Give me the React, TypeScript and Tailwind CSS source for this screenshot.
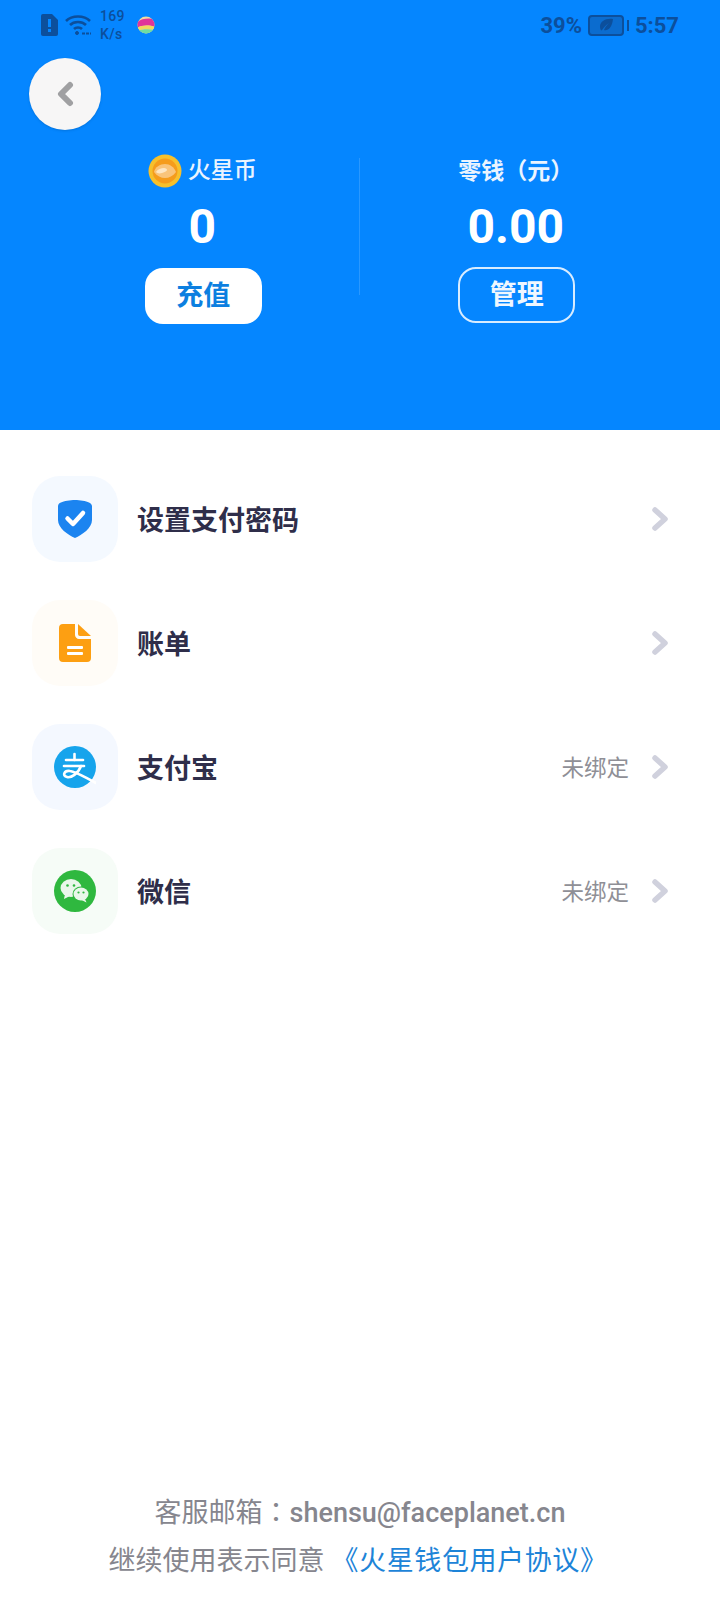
import React from "react";

const CJK = "font-['Roboto','Noto_Sans_CJK_SC',sans-serif]";

function SimIcon() {
  return (
    <svg width="17" height="22" viewBox="0 0 17 22">
      <path d="M2 0h9l6 6v14a2 2 0 0 1-2 2H2a2 2 0 0 1-2-2V2a2 2 0 0 1 2-2z" fill="#0c4f9c" />
      <rect x="7" y="5" width="3" height="8" fill="#0586ff" />
      <rect x="7" y="15" width="3" height="3" fill="#0586ff" />
    </svg>
  );
}

function WifiIcon() {
  return (
    <svg width="27" height="22" viewBox="0 0 27 22" fill="none" stroke="#0c4f9c" strokeWidth="2.6">
      <path d="M1 7c6-6 18-6 24 0" />
      <path d="M5 11c4-4 12-4 16 0" />
      <path d="M9 15c2-2 6-2 8 0" />
      <circle cx="12" cy="19" r="1.500" fill="#0c4f9c" strokeWidth="1" />
      <path d="M17 19.500h9" strokeWidth="2.200" strokeDasharray="3 1" />
    </svg>
  );
}

function BallIcon() {
  return (
    <svg width="18" height="18" viewBox="0 0 18 18">
      <defs>
        <clipPath id="ball">
          <circle cx="9" cy="9" r="8.500" />
        </clipPath>
      </defs>
      <g clipPath="url(#ball)">
        <rect width="18" height="18" fill="#f4d9a0" />
        <path d="M0 6c5-4 12-4 18-3v8C12 9 5 9 0 12z" fill="#e0359a" />
        <path d="M0 12c5-3 12-3 18-1v3C12 13 5 13 0 15z" fill="#f0d860" />
        <path d="M0 15c5-2 12-2 18-1v4H0z" fill="#6fdca0" />
      </g>
    </svg>
  );
}

function BatteryIcon() {
  return (
    <div className="flex items-center gap-[3px]">
      <div className="w-[36px] h-[21px] rounded-[4px] border-2 border-[#0c4f9c] bg-[#0b6ccf] flex items-center justify-center">
        <svg width="16" height="14" viewBox="0 0 16 14">
          <path d="M15 1C8 0 2 3 2 9c0 1 .3 2 .8 3 .2.5 1 .5 1.300 0C7 8 9 6 11 5 9 7 7 9 6 12c4 1 8-2 9-11z" fill="#0c4f9c" />
        </svg>
      </div>
      <div className="w-[2px] h-[11px] bg-[#0c4f9c]" />
    </div>
  );
}

function StatusBar() {
  return (
    <div className="h-[50px] flex items-center justify-between pl-[41px] pr-[41px] text-[#0c4f9c]">
      <div className="flex items-center">
        <SimIcon />
        <div className="ml-[7px]">
          <WifiIcon />
        </div>
        <div className="ml-[8px] w-[30px] text-[14px] leading-[18px] font-medium font-['Roboto',sans-serif] tracking-wide">
          <div>169</div>
          <div>K/s</div>
        </div>
        <div className="ml-[7px]">
          <BallIcon />
        </div>
      </div>
      <div className="flex items-center text-[22px] font-bold font-['Roboto',sans-serif]">
        <span>39%</span>
        <div className="ml-[6px]">
          <BatteryIcon />
        </div>
        <span className="ml-[6px]">5:57</span>
      </div>
    </div>
  );
}

function Coin() {
  return (
    <svg width="34" height="34" viewBox="0 0 34 34">
      <circle cx="17" cy="17" r="16.500" fill="#f6c02c" />
      <circle cx="17" cy="17" r="12.500" fill="#f59c1c" />
      <path d="M6 18c1-5 6-8 11-8s9 3 11 8c-3 4-7 6-11 6s-8-2-11-6z" fill="#f9c47a" />
      <path d="M8 18c2-3 5-4 8-4 2 0 3 1 3 2s-2 2-5 3-5 0-6-1z" fill="#fde6c4" />
    </svg>
  );
}

function ShieldIcon() {
  return (
    <svg width="34" height="38" viewBox="0 0 34 38">
      <path d="M17 0c5 0 11 1 14 2.500 2 1 3 2 3 4V20c0 8-10 15-17 18C10 35 0 28 0 20V6.500c0-2 1-3.500 3-4C6 1 12 0 17 0z" fill="#1b84f0" />
      <path d="M9.500 18.500l5.500 5.500 10-11" fill="none" stroke="#fff" strokeWidth="4.500" strokeLinecap="round" strokeLinejoin="round" />
    </svg>
  );
}

function DocIcon() {
  return (
    <svg width="32" height="38" viewBox="0 0 32 38">
      <path d="M4 0h12v11c0 2 2 4 4 4h12v19a4 4 0 0 1-4 4H4a4 4 0 0 1-4-4V4a4 4 0 0 1 4-4z" fill="#fd9f12" />
      <path d="M19 0l13 12H21a2 2 0 0 1-2-2z" fill="#fd9f12" />
      <rect x="8" y="22" width="16" height="3" rx="1" fill="#fff" />
      <rect x="8" y="28" width="16" height="3" rx="1" fill="#fff" />
    </svg>
  );
}

function AlipayIcon() {
  return (
    <svg width="42" height="42" viewBox="0 0 42 42">
      <circle cx="21" cy="21" r="21" fill="#16a4ec" />
      <g fill="none" stroke="#fff" strokeWidth="2.600" strokeLinecap="round">
        <path d="M12 14h17" />
        <path d="M20.500 8v6" />
        <path d="M10 20h20" />
        <path d="M27 20c-3 8-10 12-14 11-5-1-3-7 3-6 7 1 14 6 26 12" />
      </g>
    </svg>
  );
}

function WechatIcon() {
  return (
    <svg width="42" height="42" viewBox="0 0 42 42">
      <circle cx="21" cy="21" r="21" fill="#2fb83f" />
      <ellipse cx="17" cy="18" rx="10.500" ry="9" fill="#e9f7ea" />
      <path d="M11 24l-1 5 6-3z" fill="#e9f7ea" />
      <ellipse cx="27" cy="24" rx="8.500" ry="7.500" fill="#2fb83f" />
      <ellipse cx="27" cy="24" rx="7.500" ry="6.500" fill="#e9f7ea" />
      <path d="M31 29l1.500 3.500-5-2.500z" fill="#e9f7ea" />
      <circle cx="13.500" cy="15.500" r="1.300" fill="#2fb83f" />
      <circle cx="20" cy="15.500" r="1.300" fill="#2fb83f" />
      <circle cx="24.500" cy="22.500" r="1.100" fill="#2fb83f" />
      <circle cx="29.500" cy="22.500" r="1.100" fill="#2fb83f" />
    </svg>
  );
}

function Chevron() {
  return (
    <svg width="16" height="24" viewBox="0 0 16 24" fill="none">
      <path d="M3 3l10 9-10 9" stroke="#d0d1dd" strokeWidth="5.500" strokeLinecap="round" strokeLinejoin="round" />
    </svg>
  );
}

function Row({ icon, bg, title, note }: { icon: React.ReactNode; bg: string; title: string; note?: string }) {
  return (
    <div className="flex items-center">
      <div className={`w-[86px] h-[86px] rounded-[28px] flex items-center justify-center ${bg}`}>{icon}</div>
      <div className="ml-[19px] flex-1 pt-[4px] text-[27px] font-bold text-[#2f2e4a]">{title}</div>
      {note && <div className="mr-[23px] pt-[3px] text-[22.500px] text-[#8f8f96]">{note}</div>}
      <Chevron />
    </div>
  );
}

export default function App() {
  return (
    <div className={`w-[720px] h-[1600px] bg-white flex flex-col ${CJK}`}>
      <div className="h-[430px] bg-[#0586ff]">
        <StatusBar />
        <div className="ml-[29px] mt-[8px] w-[72px] h-[72px] rounded-full bg-[#f7f6f6] shadow-sm flex items-center justify-center">
          <svg width="18" height="26" viewBox="0 0 18 26" fill="none">
            <path d="M14 4L5 13l9 9" stroke="#a0a0a2" strokeWidth="6" strokeLinecap="round" strokeLinejoin="round" />
          </svg>
        </div>
        <div className="mt-[24px] ml-[46px] mr-[48px] flex">
          <div className="flex-1 flex flex-col items-center">
            <div className="h-[34px] flex items-center text-[23px] font-medium text-[#eaf4ff]">
              <Coin />
              <span className="ml-[6px]">火星币</span>
            </div>
            <div className="mt-[11px] h-[56px] flex items-center text-[48px] font-bold text-white font-['Roboto',sans-serif]">0</div>
            <div className="mt-[13px] ml-[2px] w-[117px] h-[56px] rounded-[18px] bg-white flex items-center justify-center text-[27px] font-bold text-[#0c7fe0]">
              充值
            </div>
          </div>
          <div className="w-px mt-[4px] h-[137px] bg-white/15" />
          <div className="flex-1 flex flex-col items-center">
            <div className="h-[34px] pb-[3px] flex items-center text-[23px] font-bold text-[#eaf4ff] font-['Noto_Sans_CJK_TC',sans-serif]">零钱（元）</div>
            <div className="mt-[11px] h-[56px] flex items-center text-[48px] font-bold text-white font-['Roboto',sans-serif]">0.00</div>
            <div className="mt-[12px] ml-[2px] w-[117px] h-[56px] rounded-[18px] border-2 border-[#d8ecff] flex items-center justify-center text-[27px] font-bold text-[#f0f7ff]">
              管理
            </div>
          </div>
        </div>
      </div>

      <div className="mt-[46px] pl-[32px] pr-[52px] flex flex-col gap-[38px]">
        <Row icon={<ShieldIcon />} bg="bg-[#f4f9ff]" title="设置支付密码" />
        <Row icon={<DocIcon />} bg="bg-[#fffcf7]" title="账单" />
        <Row icon={<AlipayIcon />} bg="bg-[#f4f8ff]" title="支付宝" note="未绑定" />
        <Row icon={<WechatIcon />} bg="bg-[#f6fcf7]" title="微信" note="未绑定" />
      </div>

      <div className="mt-auto pb-[16px] flex flex-col items-center text-[27px] leading-[46px] text-[#86868e]">
        <div>
          客服邮箱<span className="font-['Noto_Sans_CJK_TC',sans-serif]">：</span>
          <span className="font-medium">shensu@faceplanet.cn</span>
        </div>
        <div className="pr-[4px]">
          继续使用表示同意
          <span className="ml-[7px] text-[#1d84d8] tracking-[0.6px]">
            <span className="font-['Noto_Sans_CJK_TC',sans-serif]">《</span>
            火星钱包用户协议
            <span className="font-['Noto_Sans_CJK_TC',sans-serif]">》</span>
          </span>
        </div>
      </div>
    </div>
  );
}
